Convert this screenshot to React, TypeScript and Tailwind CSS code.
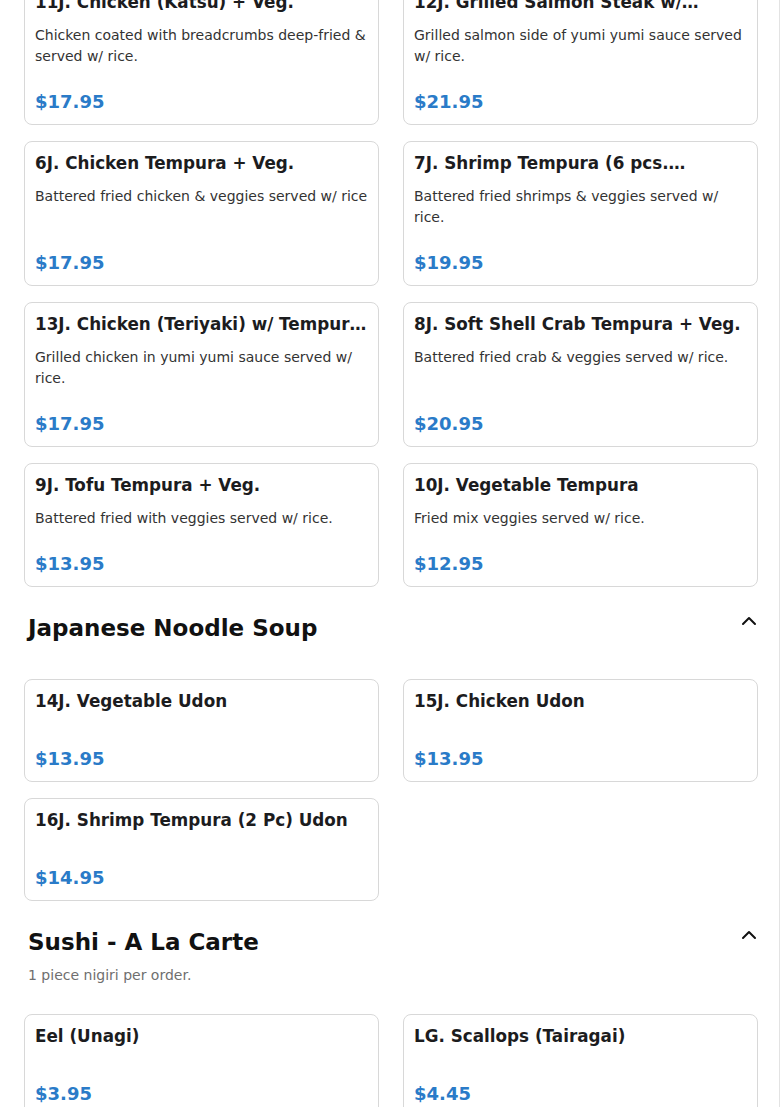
import { ChevronUp } from "lucide-react";

type Item = { name: string; desc?: string; price: string };

type Section = {
  title?: string;
  note?: string;
  items: Item[];
};

const sections: Section[] = [
  {
    items: [
      { name: "11J. Chicken (Katsu) + Veg.", desc: "Chicken coated with breadcrumbs deep-fried & served w/ rice.", price: "$17.95" },
      { name: "12J. Grilled Salmon Steak w/ Tempura + Veg.", desc: "Grilled salmon side of yumi yumi sauce served w/ rice.", price: "$21.95" },
      { name: "6J. Chicken Tempura + Veg.", desc: "Battered fried chicken & veggies served w/ rice", price: "$17.95" },
      { name: "7J. Shrimp Tempura (6 pcs. Shrimp) + Veg.", desc: "Battered fried shrimps & veggies served w/ rice.", price: "$19.95" },
      { name: "13J. Chicken (Teriyaki) w/ Tempura + Veg.", desc: "Grilled chicken in yumi yumi sauce served w/ rice.", price: "$17.95" },
      { name: "8J. Soft Shell Crab Tempura + Veg.", desc: "Battered fried crab & veggies served w/ rice.", price: "$20.95" },
      { name: "9J. Tofu Tempura + Veg.", desc: "Battered fried with veggies served w/ rice.", price: "$13.95" },
      { name: "10J. Vegetable Tempura", desc: "Fried mix veggies served w/ rice.", price: "$12.95" },
    ],
  },
  {
    title: "Japanese Noodle Soup",
    items: [
      { name: "14J. Vegetable Udon", price: "$13.95" },
      { name: "15J. Chicken Udon", price: "$13.95" },
      { name: "16J. Shrimp Tempura (2 Pc) Udon", price: "$14.95" },
    ],
  },
  {
    title: "Sushi - A La Carte",
    note: "1 piece nigiri per order.",
    items: [
      { name: "Eel (Unagi)", price: "$3.95" },
      { name: "LG. Scallops (Tairagai)", price: "$4.45" },
      { name: "Salmon (Sake)", price: "$3.95" },
      { name: "Tuna (Maguro)", price: "$4.25" },
    ],
  },
];

function MenuCard({ item }: { item: Item }) {
  return (
    <div className="flex flex-col rounded-lg border border-[#d8d8d8] bg-white px-[10px] pt-[9px] pb-[10px]">
      <h3 className="mb-[11px] line-clamp-1 text-[16.8px] font-bold leading-6 text-[#1c1c1e]">{item.name}</h3>
      {item.desc && <p className="text-[14px] leading-[21px] text-[#333]">{item.desc}</p>}
      <div className="mt-auto pt-[23px] text-[18px] font-bold leading-6 text-[#2a7bc8]">{item.price}</div>
    </div>
  );
}

export default function App() {
  return (
    <div className="h-[1107px] overflow-hidden bg-white font-['DejaVu_Sans',sans-serif]">
      <div className="w-[780px] min-h-full border-r border-[#e3e3e3] pb-10">
        {sections.map((section, i) => (
          <section key={i} className={i === 0 ? "-mt-[20px]" : "mt-[25px]"}>
            {section.title && (
              <div className="ml-6 w-[737px] pl-1">
                <div className="flex items-start justify-between">
                  <h2 className="text-[23px] font-bold leading-8 text-[#111]">{section.title}</h2>
                  <ChevronUp size={24} strokeWidth={2} className="-mt-[3px] text-[#111]" />
                </div>
                {section.note && (
                  <p className="mt-[7px] text-[14px] leading-5 text-[#6f6f6f]">{section.note}</p>
                )}
              </div>
            )}
            <div
              className={
                "ml-6 grid w-[734px] grid-cols-2 gap-x-6 gap-y-4 " +
                (!section.title ? "" : section.note ? "mt-[29px]" : "mt-[35px]")
              }
            >
              {section.items.map((item) => (
                <MenuCard key={item.name} item={item} />
              ))}
            </div>
          </section>
        ))}
      </div>
    </div>
  );
}
